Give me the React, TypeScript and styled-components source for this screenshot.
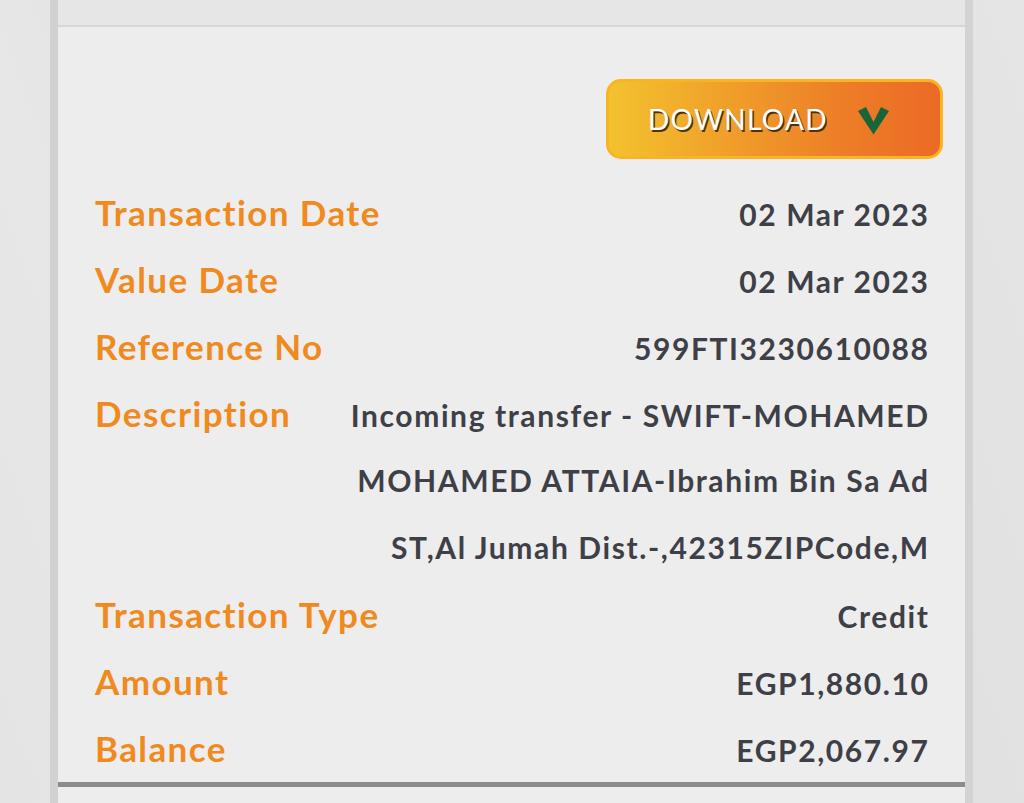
import styled, { createGlobalStyle } from "styled-components";

const GlobalStyle = createGlobalStyle`
  html, body {
    margin: 0;
    padding: 0;
    height: 100%;
    overflow: hidden;
  }
  body {
    font-family: Lato, "Open Sans", sans-serif;
    background: linear-gradient(
      70deg,
      #e4e4e4 0%,
      #e7e7e7 20%,
      #e2e2e2 35%,
      #e6e6e6 55%,
      #e1e1e1 75%,
      #e5e5e5 100%
    );
  }
`;

interface Linha {
  rotulo?: string;
  valor: string;
}

const linhas: Linha[] = [
  { rotulo: "Transaction Date", valor: "02 Mar 2023" },
  { rotulo: "Value Date", valor: "02 Mar 2023" },
  { rotulo: "Reference No", valor: "599FTI3230610088" },
  { rotulo: "Description", valor: "Incoming transfer - SWIFT-MOHAMED" },
  { valor: "MOHAMED ATTAIA-Ibrahim Bin Sa Ad" },
  { valor: "ST,Al Jumah Dist.-,42315ZIPCode,M" },
  { rotulo: "Transaction Type", valor: "Credit" },
  { rotulo: "Amount", valor: "EGP1,880.10" },
  { rotulo: "Balance", valor: "EGP2,067.97" },
];

export default function App() {
  return (
    <>
      <GlobalStyle />
      <Pagina>
        <Cartao>
          <Cabecalho />
          <Corpo>
            <AreaBotao>
              <BotaoDownload type="button">
                <span>DOWNLOAD</span>
                <svg width="31" height="29" viewBox="0 0 31 29">
                  <polygon points="0,5 8,1 15.5,16 23,1 31,5 15.5,28.5" fill="#18653a" />
                </svg>
              </BotaoDownload>
            </AreaBotao>
            <Tabela>
              {linhas.map((item, index) => (
                <Linha key={index}>
                  <Rotulo>{item.rotulo}</Rotulo>
                  <Valor>{item.valor}</Valor>
                </Linha>
              ))}
            </Tabela>
            <Divisor />
          </Corpo>
        </Cartao>
      </Pagina>
    </>
  );
}

const Pagina = styled.div`
  height: 803px;
  display: flex;
  justify-content: center;
  padding-right: 1px;
`;

const Cartao = styled.div`
  width: 907px;
  height: 803px;
  border-left: 8px solid #d1d1d1;
  border-right: 8px solid #d3d3d3;
  display: flex;
  flex-direction: column;
  background: #ededed;
`;

const Cabecalho = styled.div`
  height: 25px;
  background: #e6e6e7;
  border-bottom: 2px solid #d7d7d7;
`;

const Corpo = styled.div`
  flex: 1;
  padding: 52px 37px 0 37px;
`;

const AreaBotao = styled.div`
  display: flex;
  justify-content: flex-end;
  margin-right: -15px;
`;

const BotaoDownload = styled.button`
  width: 337px;
  height: 80px;
  box-sizing: border-box;
  border: 3px solid #fbb322;
  border-radius: 15px;
  background: linear-gradient(90deg, #f3c22f 0%, #f0a02a 35%, #ed7e27 70%, #eb6a25 100%);
  display: flex;
  align-items: center;
  justify-content: flex-start;
  gap: 30px;
  padding: 0 0 0 39px;
  cursor: pointer;

  span {
    font-family: Lato, sans-serif;
    font-weight: 400;
    font-size: 28px;
    letter-spacing: 1.3px;
    color: #ffffff;
    text-shadow: 1.5px 1.5px 0 #4a3210;
  }

  svg {
    margin-top: 2px;
  }
`;

const Tabela = styled.div`
  margin-top: 20px;
  display: flex;
  flex-direction: column;
`;

const Linha = styled.div`
  display: flex;
  align-items: baseline;
  justify-content: space-between;
  height: 67px;
  line-height: 67px;
`;

const Rotulo = styled.div`
  font-family: Lato, sans-serif;
  font-weight: 700;
  font-size: 35px;
  letter-spacing: 1.4px;
  color: #f0891e;
  white-space: nowrap;
`;

const Valor = styled.div`
  font-family: Lato, sans-serif;
  font-weight: 700;
  font-size: 30px;
  letter-spacing: 1.6px;
  color: #3e3f47;
  text-align: right;
  white-space: nowrap;
  margin-right: -1.6px;
`;

const Divisor = styled.div`
  height: 5px;
  background: #8b8d8d;
  margin: 0 -37px;
`;
